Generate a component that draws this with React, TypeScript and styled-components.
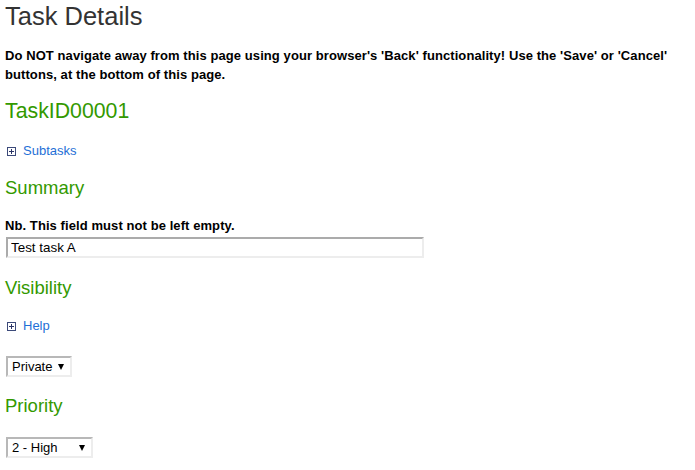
import React from "react";
import styled, { createGlobalStyle } from "styled-components";

const Global = createGlobalStyle`
  html, body { margin: 0; padding: 0; background: #fff; }
  body { font-family: "Liberation Sans", Arial, sans-serif; color: #000; }
`;

const Page = styled.div`
  display: flex;
  flex-direction: column;
  align-items: flex-start;
  padding: 1px 0 0 5px;
`;

const Title = styled.h1`
  margin: 0;
  font-size: 25.5px;
  line-height: 30px;
  font-weight: normal;
  color: #333;
`;

const Warning = styled.p`
  margin: 15px 0 0;
  font-size: 13px;
  line-height: 19px;
  font-weight: bold;
  letter-spacing: 0.08px;
  max-width: 685px;
`;

const Heading = styled.h2<{ $size: number; $lh: number; $mt: number }>`
  margin: ${(p) => p.$mt}px 0 0;
  font-size: ${(p) => p.$size}px;
  line-height: ${(p) => p.$lh}px;
  font-weight: normal;
  color: #339900;
`;

const Toggle = styled.a<{ $mt: number }>`
  margin-top: ${(p) => p.$mt}px;
  display: flex;
  align-items: center;
  gap: 7px;
  padding-left: 2px;
  font-size: 13px;
  line-height: 16px;
  color: #1f6fd6;
  text-decoration: none;
  cursor: pointer;
`;

const Note = styled.div`
  margin-top: 19px;
  font-size: 13px;
  line-height: 16px;
  font-weight: bold;
  letter-spacing: 0.08px;
`;

const TextInput = styled.input`
  margin: 3px 0 0 1px;
  box-sizing: border-box;
  width: 418px;
  height: 21px;
  padding: 0 3px;
  border-style: solid;
  border-width: 2px;
  border-color: #ababab #ededed #ededed #ababab;
  font-family: "Liberation Sans", Arial, sans-serif;
  font-size: 13.4px;
  color: #000;
  outline: none;
  background: #fff;
`;

const SelectWrap = styled.div<{ $mt: number; $w: number }>`
  position: relative;
  margin: ${(p) => p.$mt}px 0 0 1px;
  width: ${(p) => p.$w}px;
  height: 21px;
`;

const Select = styled.select`
  appearance: none;
  -webkit-appearance: none;
  box-sizing: border-box;
  width: 100%;
  height: 100%;
  padding: 0 0 0 4px;
  border-style: solid;
  border-width: 2px;
  border-color: #b8b8b8 #ededed #ededed #b8b8b8;
  border-radius: 0;
  background: #fff;
  font-family: "Liberation Sans", Arial, sans-serif;
  font-size: 13px;
  color: #000;
  outline: none;
`;

const Arrow = styled.span`
  position: absolute;
  right: 8px;
  top: 8px;
  width: 0;
  height: 0;
  border-left: 3px solid transparent;
  border-right: 3px solid transparent;
  border-top: 6px solid #000;
  pointer-events: none;
`;

const PlusBox = () => (
  <svg width="9" height="9" viewBox="0 0 9 9">
    <rect x="0.5" y="0.5" width="8" height="8" fill="#fff" stroke="#3c4a7a" />
    <path d="M2 4.5h5M4.5 2v5" stroke="#2a3466" strokeWidth="1" />
  </svg>
);

export default function App() {
  return (
    <>
      <Global />
      <Page>
        <Title>Task Details</Title>
        <Warning>
          Do NOT navigate away from this page using your browser's 'Back' functionality! Use the 'Save' or 'Cancel'
          buttons, at the bottom of this page.
        </Warning>
        <Heading $size={21.3} $lh={25} $mt={15}>TaskID00001</Heading>
        <Toggle $mt={19}>
          <PlusBox />
          Subtasks
        </Toggle>
        <Heading $size={18.5} $lh={22} $mt={18}>Summary</Heading>
        <Note>Nb. This field must not be left empty.</Note>
        <TextInput defaultValue="Test task A" />
        <Heading $size={18.5} $lh={22} $mt={19}>Visibility</Heading>
        <Toggle $mt={19}>
          <PlusBox />
          Help
        </Toggle>
        <SelectWrap $mt={22} $w={66}>
          <Select defaultValue="private">
            <option value="private">Private</option>
            <option value="public">Public</option>
          </Select>
          <Arrow />
        </SelectWrap>
        <Heading $size={18.5} $lh={22} $mt={18}>Priority</Heading>
        <SelectWrap $mt={20} $w={87}>
          <Select defaultValue="2">
            <option value="1">1 - Critical</option>
            <option value="2">2 - High</option>
            <option value="3">3 - Medium</option>
            <option value="4">4 - Low</option>
          </Select>
          <Arrow />
        </SelectWrap>
      </Page>
    </>
  );
}
